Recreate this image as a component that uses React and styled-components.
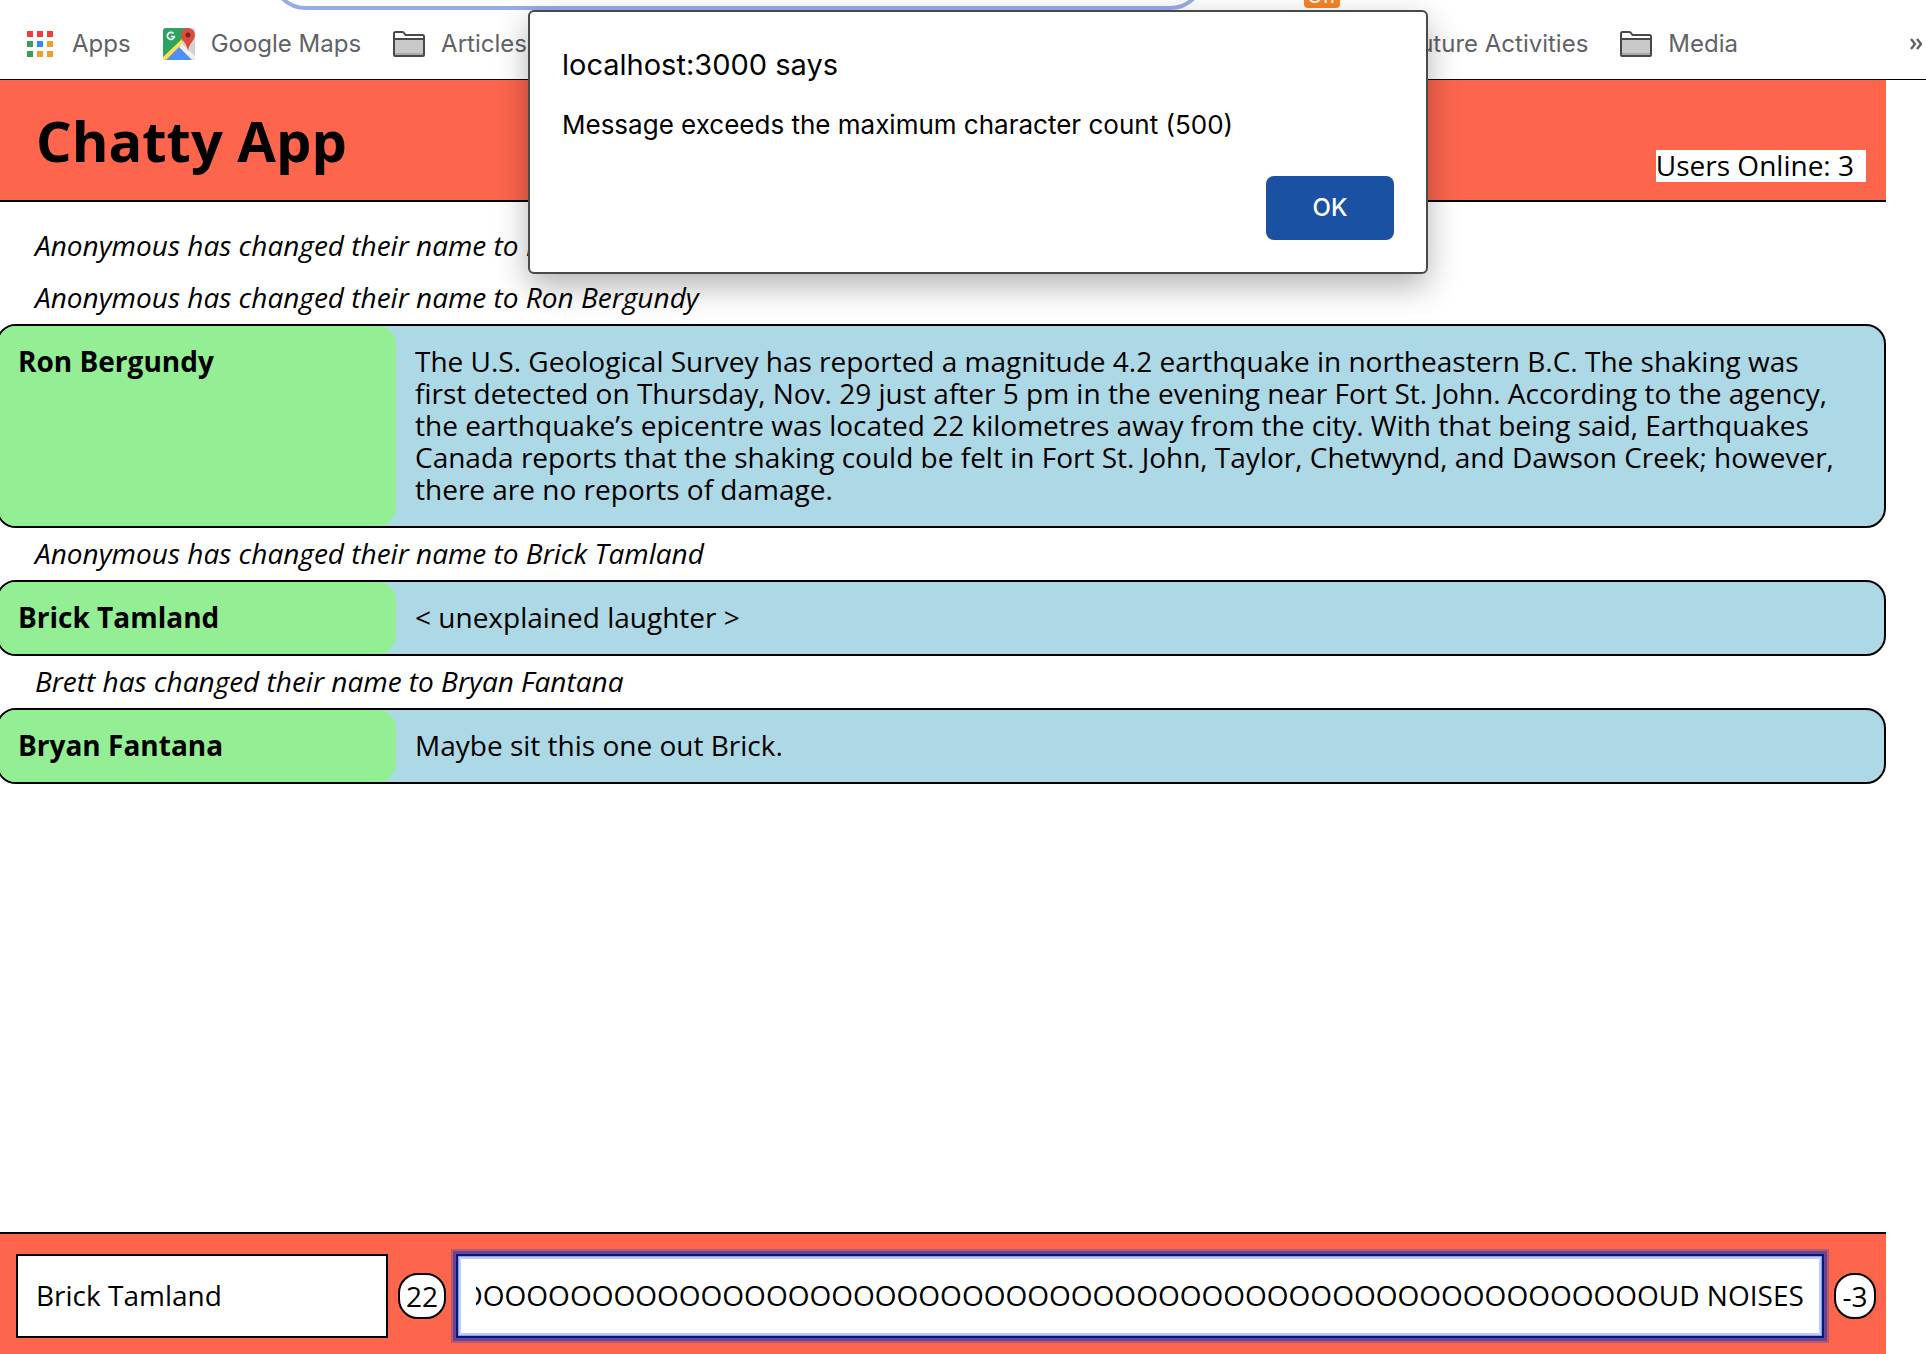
import React, { useLayoutEffect, useRef, useState } from "react";
import styled, { createGlobalStyle } from "styled-components";

const GlobalStyle = createGlobalStyle`
  *, *::before, *::after { box-sizing: border-box; }
  html, body { margin: 0; padding: 0; background: #fff; }
  body { overflow: hidden; color: #000; font: 28px/32px "Open Sans", "Noto Sans", sans-serif; }
`;

const Page = styled.div`
  position: relative;
  display: flex;
  flex-direction: column;
  height: 100vh;
  overflow: hidden;
`;

const Toolbar = styled.div`
  display: flex;
  align-items: flex-end;
  gap: 98px;
  height: 10px;
  overflow: hidden;
  padding: 0 586px 0 270px;
`;

const AddressBar = styled.input`
  flex: 1;
  min-width: 0;
  height: 72px;
  border: 4px solid #98abe9;
  border-radius: 36px;
  outline: none;
  background: #fff;
`;

const ExtensionBadge = styled.span`
  width: 36px;
  height: 24px;
  margin-bottom: 2px;
  border-radius: 4px;
  background: #f5842a;
  color: #fff;
  font: 20px/24px Inter, sans-serif;
  text-align: center;
`;

const BookmarkBar = styled.nav`
  display: flex;
  align-items: center;
  gap: 32px;
  height: 70px;
  padding: 0 4px 2px 26px;
  border-bottom: 1px solid #000;
  white-space: nowrap;
`;

const Bookmark = styled.a`
  display: flex;
  align-items: center;
  gap: 16px;
  margin-left: ${(p) => (p.$push ? "auto" : "0")};
  color: #5f6368;
  font: 24px/32px Inter, Roboto, sans-serif;
  text-decoration: none;
`;

const MoreButton = styled.button`
  margin-left: 140px;
  padding: 0;
  border: 0;
  background: none;
  color: #5f6368;
  line-height: 0;
`;

const Chat = styled.div`
  display: flex;
  flex: 1;
  flex-direction: column;
  min-height: 0;
  margin-right: 40px;
`;

const Header = styled.header`
  display: flex;
  align-items: flex-end;
  justify-content: space-between;
  height: 122px;
  padding: 0 20px 18px 36px;
  border-bottom: 2px solid #000;
  background: #fd654d;
`;

const Title = styled.h1`
  margin: 0;
  font-size: 56px;
  line-height: 84px;
  font-weight: 700;
`;

const OnlineCount = styled.span`
  padding: 0 12px 2px 0;
  background: #fff;
  line-height: 30px;
`;

const MessageList = styled.main`
  flex: 1;
  min-height: 0;
  padding-top: 18px;
`;

const Notice = styled.p`
  margin: 0;
  padding: 9px 35px 11px;
  font-style: italic;
`;

const Message = styled.article`
  display: flex;
  margin-left: -4px;
  border: 2px solid #000;
  border-radius: 20px;
  background: #add8e6;
`;

const Author = styled.strong`
  flex: 0 0 398px;
  padding: 19px 20px 21px;
  border-radius: 18px;
  background: #94ee94;
  font-weight: 700;
`;

const Body = styled.p`
  flex: 1;
  margin: 0;
  padding: 19px 40px 21px 19px;
`;

const Composer = styled.form`
  display: flex;
  align-items: center;
  gap: 10px;
  padding: 20px 10px 16px 16px;
  border-top: 2px solid #000;
  background: #fd654d;
`;

const Field = styled.input`
  flex: ${(p) => (p.$grow ? "1" : "0 0 372px")};
  min-width: 0;
  height: 84px;
  padding: 0 18px 2px;
  border: 2px solid ${(p) => (p.$active ? "#001a80" : "#000")};
  border-radius: 0;
  outline: none;
  background: #fff;
  box-shadow: ${(p) =>
    p.$active
      ? "0 0 0 3px #6b4494, 0 0 0 5px #b85a6b, inset 0 0 0 1px #8a9fe6, inset 0 0 0 3px #c0ccf2"
      : "none"};
  color: #000;
  font: inherit;
`;

const Counter = styled.output`
  min-width: 42px;
  padding: 5px 6px;
  border: 2px solid #000;
  border-radius: 20px;
  background: #fff;
  text-align: center;
`;

const Alert = styled.div`
  position: absolute;
  top: 10px;
  left: calc(50% - 435px);
  display: flex;
  flex-direction: column;
  width: 900px;
  height: 264px;
  padding: 35px 32px 32px;
  border: 2px solid #48494a;
  border-radius: 6px;
  background: #fff;
  box-shadow: 0 12px 32px rgba(0, 0, 0, 0.3);
  font-family: Inter, Roboto, sans-serif;
`;

const AlertTitle = styled.h2`
  margin: 0 0 26px;
  font-size: 29px;
  line-height: 36px;
  font-weight: 400;
`;

const AlertText = styled.p`
  margin: 0;
  font-size: 26px;
  line-height: 32px;
`;

const AlertButton = styled.button`
  align-self: flex-end;
  width: 128px;
  height: 64px;
  margin-top: auto;
  border: 0;
  border-radius: 8px;
  background: #1b51a3;
  color: #fff;
  font: 500 24px/32px Inter, Roboto, sans-serif;
`;

const TILE_COLORS = [
  "#f53b39", "#f53b39", "#f53b39",
  "#389e5c", "#2b8df5", "#f0a028",
  "#389e5c", "#f0a028", "#f0a028",
];

function AppsIcon() {
  return (
    <svg width="30" height="26" viewBox="0 0 30 26" aria-hidden="true">
      {TILE_COLORS.map((fill, i) => (
        <rect key={i} x={1 + (i % 3) * 10} y={Math.floor(i / 3) * 10} width="6" height="6" fill={fill} />
      ))}
    </svg>
  );
}

function MapsIcon() {
  return (
    <svg width="32" height="32" viewBox="0 0 32 32" aria-hidden="true">
      <defs>
        <clipPath id="tile"><rect width="32" height="32" rx="3" /></clipPath>
      </defs>
      <g clipPath="url(#tile)">
        <rect width="32" height="32" fill="#d2d2d2" />
        <path d="M0 0H24V9L0 31Z" fill="#2ba463" />
        <path d="M17 17 32 32H2Z" fill="#4f8df7" />
        <path d="M0 29 19 11 20 15 3 32H0Z" fill="#ffdf4d" />
        <path d="M16 19 19 16 32 28V32H29Z" fill="#f1f1f1" />
        <path d="M10.500 5.500A3.500 3.500 0 1 0 11.300 8.500H8" fill="none" stroke="#fff" strokeWidth="1.7" />
        <path d="M25 0A7 7 0 0 0 18 7C18 12 24 15 25 23 26 15 32 12 32 7A7 7 0 0 0 25 0Z" fill="#dc4b3e" />
        <circle cx="25" cy="7" r="2.5" fill="#7b231e" />
      </g>
    </svg>
  );
}

function FolderIcon() {
  return (
    <svg width="32" height="26" viewBox="0 0 32 26" aria-hidden="true">
      <path d="M1 24V2.500Q1 1 2.500 1H9.500Q10.500 1 11 2L12.500 4H29.500Q31 4 31 5.500V24Q31 25 30 25H2Q1 25 1 24Z" fill="#fff" stroke="#48494a" strokeWidth="2" />
      <path d="M2 9H30V24H2Z" fill="#c8c8c8" />
      <path d="M2 22H30V24H2Z" fill="#aaa" />
      <path d="M1 8H31" stroke="#48494a" strokeWidth="2" />
    </svg>
  );
}

function ChevronsIcon() {
  return (
    <svg width="12" height="12" viewBox="0 0 12 12" aria-hidden="true">
      <path d="M1 1 5 6 1 11M7 1 11 6 7 11" fill="none" stroke="#5f6368" strokeWidth="2.4" />
    </svg>
  );
}

const FEED = [
  { notice: "Anonymous has changed their name to Brett" },
  { notice: "Anonymous has changed their name to Ron Bergundy" },
  {
    author: "Ron Bergundy",
    text: "The U.S. Geological Survey has reported a magnitude 4.2 earthquake in northeastern B.C. The shaking was first detected on Thursday, Nov. 29 just after 5 pm in the evening near Fort St. John. According to the agency, the earthquake’s epicentre was located 22 kilometres away from the city. With that being said, Earthquakes Canada reports that the shaking could be felt in Fort St. John, Taylor, Chetwynd, and Dawson Creek; however, there are no reports of damage.",
  },
  { notice: "Anonymous has changed their name to Brick Tamland" },
  { author: "Brick Tamland", text: "< unexplained laughter >" },
  { notice: "Brett has changed their name to Bryan Fantana" },
  { author: "Bryan Fantana", text: "Maybe sit this one out Brick." },
];

const MAX_NAME = 35;
const MAX_MESSAGE = 500;

export default function App() {
  const [name, setName] = useState("Brick Tamland");
  const [message, setMessage] = useState("L" + "O".repeat(493) + "UD NOISES");
  const messageRef = useRef(null);

  useLayoutEffect(() => {
    const field = messageRef.current;
    const toEnd = () => {
      field.scrollLeft = field.scrollWidth;
    };
    toEnd();
    document.fonts.ready.then(toEnd);
  }, []);

  return (
    <Page>
      <GlobalStyle />
      <Toolbar>
        <AddressBar aria-label="Address" />
        <ExtensionBadge>Off</ExtensionBadge>
      </Toolbar>
      <BookmarkBar>
        <Bookmark href="#"><AppsIcon />Apps</Bookmark>
        <Bookmark href="#"><MapsIcon />Google Maps</Bookmark>
        <Bookmark href="#"><FolderIcon />Articles</Bookmark>
        <Bookmark href="#" $push><FolderIcon />Future Activities</Bookmark>
        <Bookmark href="#"><FolderIcon />Media</Bookmark>
        <MoreButton aria-label="More bookmarks"><ChevronsIcon /></MoreButton>
      </BookmarkBar>
      <Chat>
        <Header>
          <Title>Chatty App</Title>
          <OnlineCount>Users Online: 3</OnlineCount>
        </Header>
        <MessageList>
          {FEED.map((item, i) =>
            item.notice ? (
              <Notice key={i}>{item.notice}</Notice>
            ) : (
              <Message key={i}>
                <Author>{item.author}</Author>
                <Body>{item.text}</Body>
              </Message>
            )
          )}
        </MessageList>
        <Composer onSubmit={(e) => e.preventDefault()}>
          <Field aria-label="Your name" value={name} onChange={(e) => setName(e.target.value)} />
          <Counter>{MAX_NAME - name.length}</Counter>
          <Field
            $grow
            $active
            ref={messageRef}
            aria-label="Message"
            value={message}
            onChange={(e) => setMessage(e.target.value)}
          />
          <Counter>{MAX_MESSAGE - message.length}</Counter>
        </Composer>
      </Chat>
      <Alert role="alertdialog" aria-labelledby="alert-title" aria-describedby="alert-text">
        <AlertTitle id="alert-title">localhost:3000 says</AlertTitle>
        <AlertText id="alert-text">Message exceeds the maximum character count (500)</AlertText>
        <AlertButton>OK</AlertButton>
      </Alert>
    </Page>
  );
}
